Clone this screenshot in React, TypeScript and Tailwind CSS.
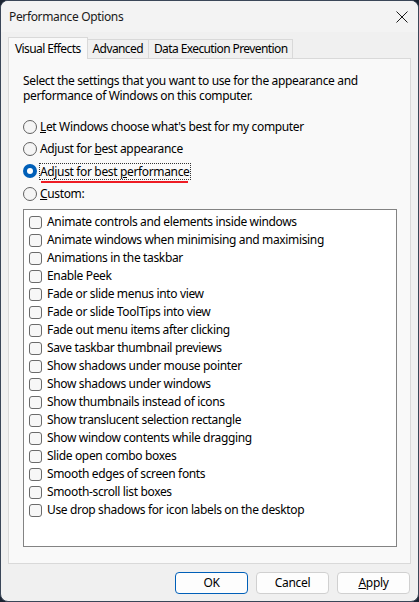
import React from "react";

const font = { fontFamily: '"Noto Sans", "Open Sans", sans-serif' };

const items = [
  "Animate controls and elements inside windows",
  "Animate windows when minimising and maximising",
  "Animations in the taskbar",
  "Enable Peek",
  "Fade or slide menus into view",
  "Fade or slide ToolTips into view",
  "Fade out menu items after clicking",
  "Save taskbar thumbnail previews",
  "Show shadows under mouse pointer",
  "Show shadows under windows",
  "Show thumbnails instead of icons",
  "Show translucent selection rectangle",
  "Show window contents while dragging",
  "Slide open combo boxes",
  "Smooth edges of screen fonts",
  "Smooth-scroll list boxes",
  "Use drop shadows for icon labels on the desktop",
];

function Radio({ checked }: { checked?: boolean }) {
  return checked ? (
    <span className="w-[14px] h-[14px] rounded-full bg-[#005fb8] flex items-center justify-center shrink-0">
      <span className="w-[6px] h-[6px] rounded-full bg-white" />
    </span>
  ) : (
    <span className="w-[14px] h-[14px] rounded-full border border-[#616161] bg-[#f5f5f5] shrink-0" />
  );
}

export default function App() {
  return (
    <div className="w-[419px] h-[602px] bg-[#1b2432] text-[12px] tracking-[-0.35px] text-black" style={font}>
      <div className="w-full h-full rounded-[8px] border border-[#3a4658] bg-[#f0f0f0] flex flex-col overflow-hidden">
        {/* title bar */}
        <div className="h-[31px] flex items-center justify-between pl-[8px] pr-[8px] bg-[#f3f3f3] shrink-0">
          <span className="text-[12px] text-[#1a1a1a]">Performance Options</span>
          <svg width="14" height="14" viewBox="0 0 14 14" className="mr-[1px]">
            <path d="M1.5 1.5 L12.5 12.5 M12.5 1.5 L1.5 12.5" stroke="#1a1a1a" strokeWidth="1" fill="none" />
          </svg>
        </div>
        {/* tabs */}
        <div className="flex items-end pl-[7px] h-[26px] shrink-0 tracking-[-0.6px]">
          <div className="h-[22px] px-[6px] flex items-start pt-[2px] bg-[#f9f9f9] border border-b-0 border-[#d9d9d9] relative z-10 -mb-px">
            Visual Effects
          </div>
          <div className="h-[19px] px-[5px] flex items-center border border-l-0 border-b-0 border-[#d9d9d9] bg-[#f0f0f0]">
            Advanced
          </div>
          <div className="h-[19px] px-[5px] flex items-center border border-l-0 border-b-0 border-[#d9d9d9] bg-[#f0f0f0]">
            Data Execution Prevention
          </div>
        </div>
        {/* panel */}
        <div className="mx-[7px] h-[506px] border border-[#d9d9d9] bg-[#f9f9f9] flex flex-col pl-[14px] pt-[14px] shrink-0">
          <p className="leading-[15px] w-[370px]">
            Select the settings that you want to use for the appearance and performance of Windows on this computer.
          </p>
          <div className="flex flex-col mt-[13px]">
            <label className="flex items-center gap-[3px] h-[22px]">
              <Radio />
              <span><span className="underline">L</span>et Windows choose what's best for my computer</span>
            </label>
            <label className="flex items-center gap-[3px] h-[22px]">
              <Radio />
              <span>Adjust for <span className="underline">b</span>est appearance</span>
            </label>
            <label className="flex items-center gap-[3px] h-[22px]">
              <Radio checked />
              <span className="relative outline outline-1 outline-dotted outline-[#333] leading-[15px] pr-[1px]">
                Adjust for best <span className="underline">p</span>erformance
                <span className="absolute left-[1px] right-[2px] bottom-[-4px] h-[2px] bg-[#ee1c24]" />
              </span>
            </label>
            <label className="flex items-center gap-[3px] h-[22px] mt-[1px]">
              <Radio />
              <span><span className="underline">C</span>ustom:</span>
            </label>
          </div>
          <div className="mt-[4px] w-[374px] h-[338px] border border-[#838383] bg-white pt-[3px] pl-[5px]">
            {items.map((t) => (
              <div key={t} className="h-[18px] flex items-center gap-[5px]">
                <span className="w-[13px] h-[13px] rounded-[3px] border border-[#6b6b6b] bg-[#f7f7f7] shrink-0" />
                <span>{t}</span>
              </div>
            ))}
          </div>
        </div>
        {/* buttons */}
        <div className="flex justify-end gap-[8px] pr-[8px] mt-[8px]">
          <button className="w-[73px] h-[22px] rounded-[4px] border border-[#005fb8] bg-[#fdfdfd] text-[12px] tracking-[-0.3px]" style={font}>
            OK
          </button>
          <button className="w-[73px] h-[22px] rounded-[4px] border border-[#d0d0d0] bg-[#fdfdfd] text-[12px] tracking-[-0.3px]" style={font}>
            Cancel
          </button>
          <button className="w-[73px] h-[22px] rounded-[4px] border border-[#d0d0d0] bg-[#fdfdfd] text-[12px] tracking-[-0.3px]" style={font}>
            <span className="underline">A</span>pply
          </button>
        </div>
      </div>
    </div>
  );
}
